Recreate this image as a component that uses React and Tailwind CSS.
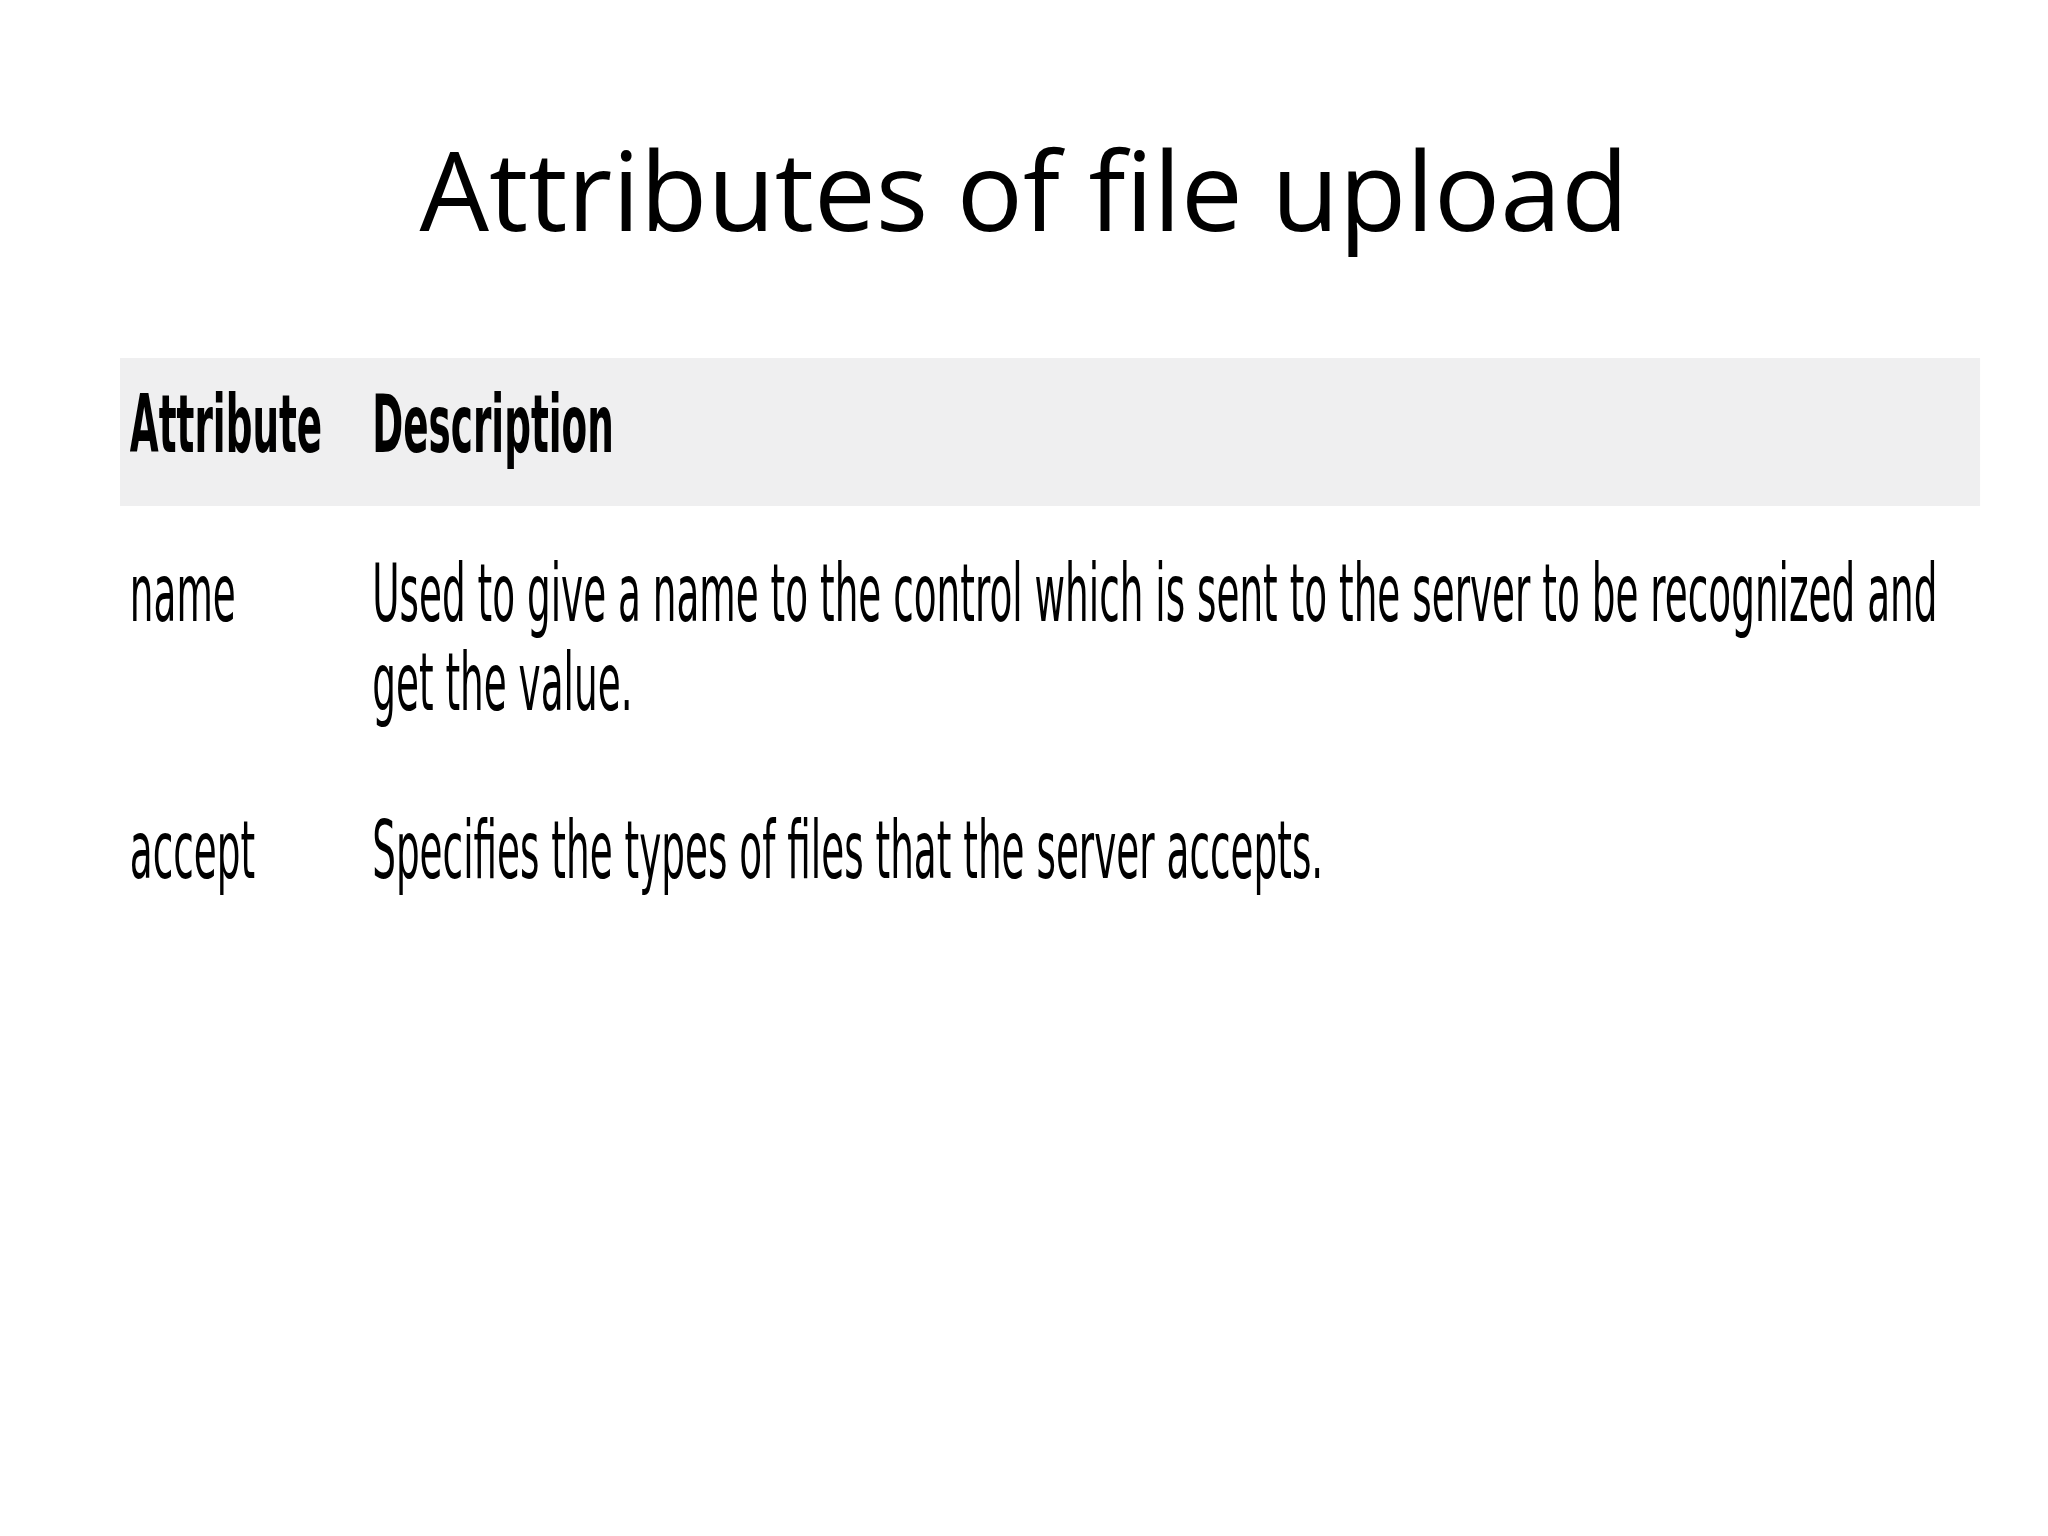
const rows = [
  {
    name: 'name',
    description:
      'Used to give a name to the control which is sent to the server to be recognized and get the value.',
  },
  {
    name: 'accept',
    description: 'Specifies the types of files that the server accepts.',
  },
];

export default function App() {
  return (
    <div className="w-[2048px] h-[1536px] bg-white overflow-hidden">
      {/* Slide title */}
      <h1 className="pt-[133px] text-center font-['Open_Sans',sans-serif] text-[110px] leading-none text-black">
        Attributes of file upload
      </h1>

      {/* Table: a squeezed screenshot in the original, so it is drawn wide and scaled on x */}
      <div className="ml-[120px] mt-[115px] w-[1860px]">
        <div className="w-[3983px] origin-top-left scale-x-[0.467] font-['DejaVu_Sans',sans-serif] text-[80px] leading-[89px] text-black">
          <div className="flex bg-[#efeff0] pt-[22px] pb-[37px] font-bold">
            <div className="w-[540px] shrink-0 pl-[21px]">Attribute</div>
            <div className="flex-1 pr-[21px]">Description</div>
          </div>

          {rows.map((row, i) => (
            <div
              key={row.name}
              className={`flex pt-[43px] ${i === rows.length - 1 ? 'pb-0' : 'pb-[36px]'}`}
            >
              <div className="w-[540px] shrink-0 pl-[21px]">{row.name}</div>
              <div className="flex-1 pr-[21px]">{row.description}</div>
            </div>
          ))}
        </div>
      </div>
    </div>
  );
}
